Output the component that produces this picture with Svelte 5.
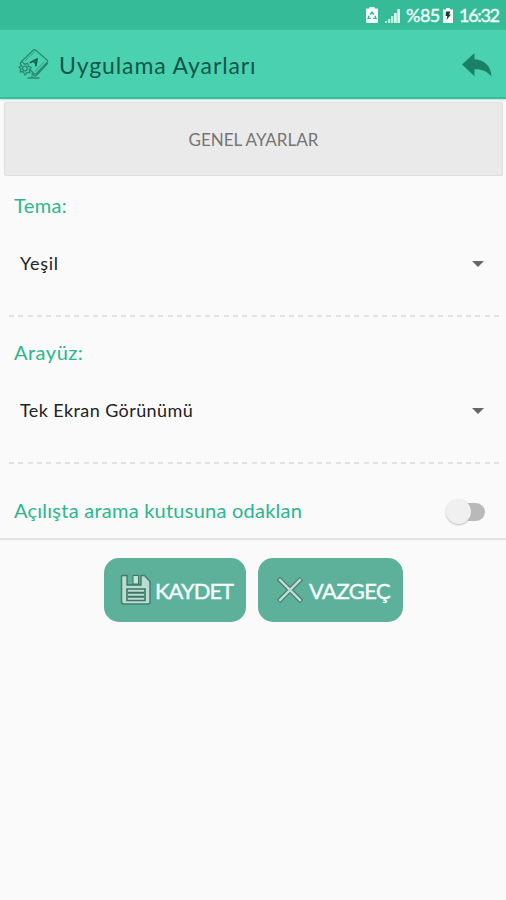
<script>
  let theme = "Yeşil";
  let view = "Tek Ekran Görünümü";
  let focusSearch = false;

  function toggleFocus() {
    focusSearch = !focusSearch;
  }
</script>

<main>
  <div class="status">
    <svg class="recycle" width="12" height="16" viewBox="0 0 12 16">
      <path d="M3.500 0h5v1.600H11q1 0 1 1V15q0 1-1 1H1q-1 0-1-1V2.600q0-1 1-1h2.500z" fill="#f4fffb" />
      <path d="M4.200 7.500 6 5l1.800 2.500M9 8.800l1 2.600H7.200M4.800 11.400H2l1-2.600" fill="none" stroke="#35b18d" stroke-width="1.300" />
    </svg>
    <svg class="signal" width="16" height="15" viewBox="0 0 16 15">
      <path d="M0 13h2v2H0zM3 11h2.400v4H3zM6 8h2.400v7H6z" fill="#b9eddc" />
      <path d="M9 5h2.800v10H9zM12.300 1H15v14h-2.700z" fill="#d9f7ed" />
    </svg>
    <span class="percent">%85</span>
    <svg class="battery" width="10" height="15" viewBox="0 0 10 15">
      <path d="M3 0h4v1.500h3V15H0V1.500h3z" fill="#f6fffc" />
      <path d="M3 3.500h4.500L6 6.500h2L3.500 12l.8-4H2.600z" fill="#1c3f35" />
    </svg>
    <span class="time">16:32</span>
  </div>

  <header>
    <svg class="logo" width="32" height="32" viewBox="0 0 32 32" fill="none" stroke="#2b8a72" stroke-width="1.300" stroke-linejoin="round" stroke-linecap="round">
      <path d="M3.500 13.500 15.200 2.300q1.300-1.200 2.600 0l11.400 9.900q1 1 0 2L18.500 25.500q-1.300 1.200-2.600 0L12 21.800M29.500 15.500 18.400 27.500q-1.200 1-2.500 0l-2-1.800" />
      <path d="M7.500 12.500 16.500 4M17 23.500l8.500-9" stroke-width=".7" />
      <path d="m12.500 14.500 6.500-3.500-1.200 6.500M15.300 13.200l2.700 2" stroke="#12624e" stroke-width="1.800" />
      <path d="M3.500 13.500q-2.500 2.500.5 4.500l-3 1 2 2-1 3 3.200-.3L7 27l2-2.500 3 .2-.8-3 2-2.200-3-1.400-.6-3-2.800 1.200z" />
      <circle cx="6.800" cy="20.500" r="2.300" />
      <path d="M10 30h11M14 28v2" />
    </svg>
    <h1>Uygulama Ayarları</h1>
    <svg class="back" width="30" height="25" viewBox="0 0 30 25">
      <path d="M0 11.500 12.500 0v6.200C22.500 6.700 29 13 29.500 23.500 25 18 19.500 16 12.500 16.300v7z" fill="#1b8165" />
    </svg>
  </header>

  <div class="tab">GENEL AYARLAR</div>

  <section>
    <h2 class="tema">Tema:</h2>
    <div class="select">
      <span class="theme">{theme}</span>
      <i></i>
    </div>
  </section>
  <section>
    <h2 class="arayuz">Arayüz:</h2>
    <div class="select">
      <span class="view">{view}</span>
      <i></i>
    </div>
  </section>

  <div class="switch-row">
    <h2 class="focus">Açılışta arama kutusuna odaklan</h2>
    <button class="switch" class:on={focusSearch} on:click={toggleFocus} aria-label="Açılışta arama kutusuna odaklan">
      <b></b>
    </button>
  </div>

  <div class="actions">
    <button class="save">
      <svg width="32" height="32" viewBox="0 0 32 32">
        <path d="M2 1.500h22.500L30 7.500V28q0 2-2 2H4q-2.500 0-2.500-2.500V3z" fill="#b9ddd1" stroke="#457f70" stroke-width="1.500" />
        <path d="M7 .5h14V11H7z" fill="#5db099" />
        <path d="M7 1v10h14V1" fill="none" stroke="#3c7465" stroke-width="1.300" />
        <path d="M13 1.500h5.500V10H13z" fill="#c3e2d8" stroke="#3c7465" />
        <path d="M7 15h18v11.500H7z" fill="#b9ddd1" stroke="#3c7465" stroke-width="1.600" />
        <path d="M8 18.800h16M8 22.800h16" stroke="#3c7465" stroke-width="1.900" />
      </svg>
      <span>KAYDET</span>
    </button>
    <button class="cancel">
      <svg width="26" height="26" viewBox="0 0 26 26" fill="none">
        <path d="m1.500 1.500 23 23m0-23-23 23" stroke="#477e70" stroke-width="4.800" />
        <path d="m2.200 2.200 21.600 21.600m0-21.600L2.200 23.800" stroke="#bfded5" stroke-width="2.400" />
      </svg>
      <span>VAZGEÇ</span>
    </button>
  </div>
</main>

<style>
  :global(body) {
    margin: 0;
    background: #fafafa;
  }
  main {
    width: 506px;
    height: 900px;
    overflow: hidden;
    background: #fafafa;
    font-family: Lato, "Open Sans", sans-serif;
  }
  h1, h2 {
    margin: 0;
    font-weight: 400;
    white-space: nowrap;
  }
  button {
    border: 0;
    padding: 0;
    font-family: inherit;
  }
  svg {
    display: block;
    flex: none;
  }
  .status {
    display: flex;
    align-items: center;
    height: 30px;
    box-sizing: border-box;
    padding-left: 366px;
    background: #36bb98;
    color: #f2fffa;
    font-size: 18px;
    line-height: 30px;
    -webkit-text-stroke: 0.4px #f2fffa;
  }
  .signal {
    margin-left: 7px;
  }
  .percent {
    width: 33px;
    margin-left: 5px;
    letter-spacing: -0.5px;
  }
  .battery {
    margin-left: 4px;
  }
  .time {
    margin-left: 6px;
    letter-spacing: -1.3px;
  }
  header {
    display: flex;
    align-items: center;
    height: 69px;
    box-sizing: border-box;
    padding: 0 14px 0 18px;
    background: #4ad1af;
    border-bottom: 2px solid #35c09d;
    box-shadow: 0 1px 2px #c5d8d3;
  }
  h1 {
    flex: 1;
    margin-left: 9px;
    padding-top: 3px;
    font-size: 23px;
    letter-spacing: 0.9px;
    color: #12584a;
  }
  .back {
    margin-top: 3px;
  }
  .tab {
    display: flex;
    align-items: center;
    justify-content: center;
    height: 74px;
    box-sizing: border-box;
    margin: 3px 3px 0 4px;
    border: 1px solid #dedede;
    border-radius: 2px;
    background: #eaeaea;
    color: #757575;
    font-size: 17px;
  }
  section {
    height: 147px;
    box-sizing: border-box;
    padding: 16px 21px 0 14px;
    background: repeating-linear-gradient(90deg, #e2e2e2 0 5px, transparent 5px 9.33px) 9px 139px / 490px 2px no-repeat;
  }
  h2 {
    font-size: 20px;
    line-height: 26px;
    color: #2bb68d;
  }
  .tema {
    letter-spacing: 0.35px;
  }
  .arayuz {
    letter-spacing: 0.5px;
  }
  .focus {
    letter-spacing: 0.24px;
  }
  .select {
    display: flex;
    align-items: center;
    justify-content: space-between;
    height: 30px;
    margin-top: 31px;
    padding-left: 6px;
    padding-right: 1px;
    font-size: 18px;
    color: #222;
  }
  .theme {
    letter-spacing: 0.7px;
  }
  .view {
    letter-spacing: 0.4px;
  }
  .select span {
    margin-top: -2px;
  }
  .select i {
    border: 6px solid transparent;
    border-top-color: #666;
    border-bottom: 0;
  }
  .switch-row {
    display: flex;
    align-items: center;
    justify-content: space-between;
    height: 70px;
    box-sizing: border-box;
    padding: 15px 20px 0 14px;
    border-bottom: 2px solid #e2e2e2;
  }
  .switch-row h2 {
    margin-top: -3px;
  }
  .switch {
    display: flex;
    align-items: center;
    width: 40px;
    height: 26px;
    background: none;
  }
  .switch::after {
    content: "";
    width: 28px;
    height: 18px;
    margin-left: -14px;
    border-radius: 0 9px 9px 0;
    background: #b9b9b9;
  }
  .switch b {
    position: relative;
    z-index: 1;
    flex: none;
    width: 25px;
    height: 25px;
    border-radius: 50%;
    background: #f0f0f0;
    box-shadow: 0 1px 2px #bbb;
  }
  .switch.on b {
    order: 2;
    background: #2bb68d;
  }
  .actions {
    display: flex;
    gap: 12px;
    padding: 18px 0 0 104px;
  }
  .actions button {
    display: flex;
    align-items: center;
    height: 64px;
    border-radius: 15px;
    background: #5db099;
    color: #f5fffc;
    font-size: 22px;
    -webkit-text-stroke: 0.4px #f5fffc;
  }
  .save {
    width: 142px;
    padding-left: 16px;
  }
  .save span {
    margin-left: 3px;
    letter-spacing: -1px;
  }
  .cancel {
    width: 145px;
    padding-left: 19px;
  }
  .cancel span {
    margin-left: 6px;
    letter-spacing: -0.6px;
  }
</style>
